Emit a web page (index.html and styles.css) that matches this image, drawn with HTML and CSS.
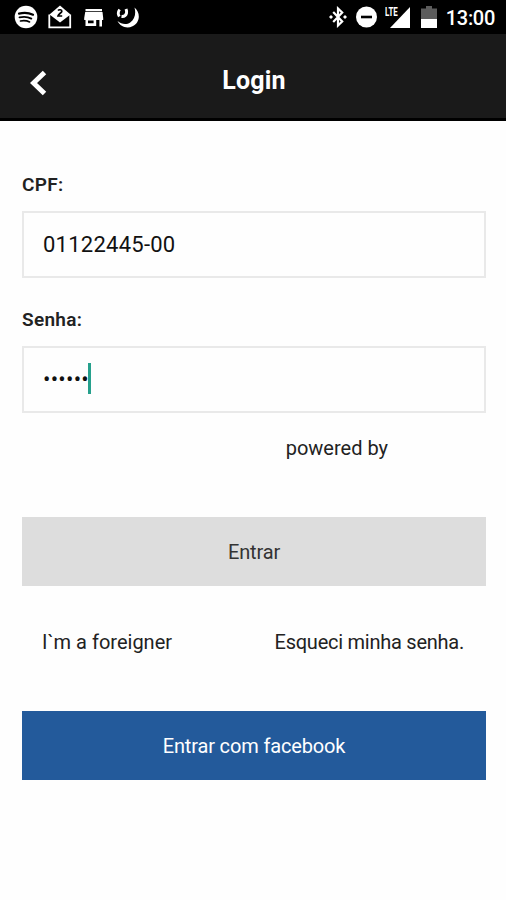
FILE: index.html
```html
<!DOCTYPE html>
<html lang="pt-BR">
<head>
    <meta charset="UTF-8">
    <meta name="viewport" content="width=device-width, initial-scale=1.0">
    <title>Login</title>
    <link rel="stylesheet" href="styles.css">
</head>
<body>
    <!-- Status bar -->
    <div class="status-bar">
        <div class="status-left">
            <svg width="24" height="24" viewBox="0 0 24 24">
                <circle cx="12" cy="12" r="11.300" fill="#fff"/>
                <g fill="none" stroke="#000" stroke-linecap="round">
                    <path d="M5 8.600c5-1.200 10-.8 14 1.100" stroke-width="2.200"/>
                    <path d="M5.500 12.400c4.300-1 8.400-.6 11.800 1.200" stroke-width="1.900"/>
                    <path d="M6.500 16c3.600-.8 6.200-.5 9.100 1" stroke-width="1.600"/>
                </g>
            </svg>
            <svg width="24" height="24" viewBox="0 0 24 24">
                <path d="M1.300 9.500v12.800h20.900V9.500" fill="none" stroke="#fff" stroke-width="1.800"/>
                <path d="M1.500 9.500L12 .5l10.500 9L12 17.500z" fill="#fff"/>
                <path d="M10 5.500c1-1.200 4-1 3.800.8-.2 1.500-3.300 2.500-3.800 4.700h4.200" fill="none" stroke="#000" stroke-width="1.700"/>
            </svg>
            <svg class="icon-store" width="20" height="24" viewBox="0 0 20 24">
                <path d="M1.500 4h16.500v2.300H1.500zM1.200 7h17.300l.7 6v2H18v6.500h-2.600V15h-3.200v6H1.500v-6H.2v-2zM4 15.500v2.800h5.600v-2.800z" fill="#fff" fill-rule="evenodd"/>
            </svg>
            <svg width="24" height="24" viewBox="0 0 24 24">
                <path d="M18.500 2.500C25 8 24 17.500 16.500 21.300 11 24 4.500 22 1.500 16c4 3.500 9 4 12.700 1.500C18.800 14.300 20.200 8.500 18.500 2.500z" fill="#fff"/>
                <path d="M5.500 11.500c3 .3 4.500-1.300 5-3.300.3-1.500 0-3-.5-4.200" fill="none" stroke="#fff" stroke-width="3"/>
                <path d="M3.600 4.500C1.900 6.800 1.900 9.300 3.300 11.600" fill="none" stroke="#fff" stroke-width="2.800"/>
            </svg>
        </div>
        <div class="status-right">
            <svg class="icon-bluetooth" width="18" height="22" viewBox="0 0 18 22">
                <path d="M4.200 6l9 9.500L9 19.500V2.500l4.200 4L4.200 16" fill="none" stroke="#fff" stroke-width="2.200"/>
                <path d="M0 11l2-2 2 2-2 2zM14 11l2-2 2 2-2 2z" fill="#fff"/>
            </svg>
            <svg class="icon-dnd" width="22" height="22" viewBox="0 0 22 22">
                <circle cx="10.500" cy="11" r="10.500" fill="#fff"/>
                <path d="M5 9.700h11v2.600H5z" fill="#000"/>
            </svg>
            <div class="signal">
                <span class="signal-type">LTE</span>
                <svg width="20" height="21" viewBox="0 0 20 21">
                    <path d="M20 0v21H0z" fill="#fff"/>
                </svg>
            </div>
            <svg class="icon-battery" width="16" height="22" viewBox="0 0 16 22">
                <path d="M5 0h6v2.500h5V13H0V2.500h5z" fill="#5c5c5c"/>
                <path d="M0 13h16v9H0z" fill="#fff"/>
            </svg>
            <span class="clock">13:00</span>
        </div>
    </div>

    <!-- Title bar -->
    <div class="header">
        <a href="#" class="back-btn" aria-label="Voltar">
            <svg width="18" height="26" viewBox="0 0 18 26">
                <path d="M14.500 2.500L3.500 13l11 10.500" fill="none" stroke="#fff" stroke-width="5"/>
            </svg>
        </a>
        <h1>Login</h1>
    </div>

    <!-- Login form -->
    <form class="login-form">
        <label for="cpf">CPF:</label>
        <input type="text" id="cpf" class="field" value="01122445-00">

        <label for="senha">Senha:</label>
        <div class="field" id="senha">
            <span class="dots">••••••</span>
            <span class="cursor"></span>
        </div>

        <p class="powered">powered by</p>

        <button type="button" class="btn btn-login">Entrar</button>

        <div class="links">
            <a href="#">I`m a foreigner</a>
            <a href="#" class="forgot">Esqueci minha senha.</a>
        </div>

        <button type="button" class="btn btn-facebook">Entrar com facebook</button>
    </form>
</body>
</html>
```
FILE: styles.css
```css
* {
    margin: 0;
    padding: 0;
    box-sizing: border-box;
    font-family: Roboto, "Liberation Sans", sans-serif;
}
body {
    background-color: #fefefe;
    color: #222;
    font-size: 20px;
    overflow-x: hidden;
}
svg {
    display: block;
}

/* Status bar */
.status-bar {
    height: 34px;
    display: flex;
    justify-content: space-between;
    align-items: center;
    padding: 0 11px 0 14px;
    background-color: #000;
    color: #fff;
}
.status-left,
.status-right {
    display: flex;
    align-items: center;
}
.status-left {
    gap: 10px;
}
.icon-store {
    margin-left: 2px;
    margin-right: 2px;
}
.icon-dnd {
    margin-left: 9px;
}
.signal {
    display: flex;
    margin-left: 7px;
}
/* Narrow label over the corner of the signal triangle */
.signal-type {
    width: 5px;
    font-size: 12px;
    line-height: 11px;
    font-weight: 700;
    transform: scaleX(0.66);
    transform-origin: left;
    white-space: nowrap;
}
.icon-battery {
    margin-left: 11px;
}
.clock {
    margin-left: 9px;
    padding-top: 2px;
    font-size: 20px;
    font-weight: 500;
    letter-spacing: -0.3px;
}

/* Title bar */
.header {
    height: 87px;
    display: grid;
    grid-template-columns: 60px 1fr 60px;
    align-items: center;
    background-color: #1a1a1a;
    border-bottom: 3px solid #000;
}
.back-btn {
    padding: 14px 0 0 30px;
}
.header h1 {
    padding: 10px 0 0 2px;
    text-align: center;
    color: #fff;
    font-size: 25px;
    line-height: 30px;
    font-weight: 700;
    letter-spacing: 0.2px;
}

/* Form */
.login-form {
    display: flex;
    flex-direction: column;
    padding: 50px 20px 0 22px;
}
.login-form label {
    height: 28px;
    line-height: 28px;
    margin-bottom: 12px;
    font-size: 19px;
    font-weight: 600;
    letter-spacing: 0.3px;
}
.field {
    width: 100%;
    height: 67px;
    margin-bottom: 28px;
    padding: 0 19px;
    display: flex;
    align-items: center;
    border: 2px solid #e9e9e9;
    background-color: #fefefe;
    color: #111;
    font-size: 22px;
    letter-spacing: 0.25px;
    outline: none;
}
.cursor {
    width: 3px;
    height: 31px;
    margin: -2px 0 0 -1px;
    background-color: #26a08c;
}
.powered {
    height: 28px;
    line-height: 28px;
    margin: -7px 98px 55px 0;
    text-align: right;
}
.btn {
    height: 69px;
    border: none;
    font-size: 20px;
    letter-spacing: -0.15px;
}
.btn-login {
    background-color: #ddd;
    color: #333;
}
.links {
    display: flex;
    justify-content: space-between;
    height: 28px;
    line-height: 28px;
    margin: 42px 22px 55px 20px;
}
.links a {
    color: #222;
    text-decoration: none;
}
.links .forgot {
    letter-spacing: -0.25px;
}
.btn-facebook {
    background-color: #235a9b;
    color: #fff;
}
```
